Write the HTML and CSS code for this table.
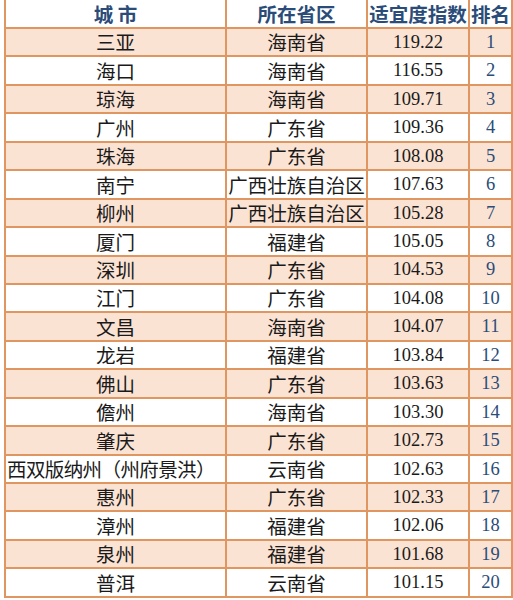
FILE: index.html
```html
<!DOCTYPE html>
<html lang="zh-CN">
<head>
<meta charset="utf-8">
<link rel="stylesheet" href="styles.css">
</head>
<body>
<table class="rank-table">
  <colgroup>
    <col class="c-city"><col class="c-prov"><col class="c-idx"><col class="c-rank">
  </colgroup>
  <thead>
    <tr class="head"><th>城 市</th><th>所在省区</th><th>适宜度指数</th><th>排名</th></tr>
  </thead>
  <tbody>
    <tr class="alt"><td>三亚</td><td>海南省</td><td class="num">119.22</td><td class="rk">1</td></tr>
    <tr><td>海口</td><td>海南省</td><td class="num">116.55</td><td class="rk">2</td></tr>
    <tr class="alt"><td>琼海</td><td>海南省</td><td class="num">109.71</td><td class="rk">3</td></tr>
    <tr><td>广州</td><td>广东省</td><td class="num">109.36</td><td class="rk">4</td></tr>
    <tr class="alt"><td>珠海</td><td>广东省</td><td class="num">108.08</td><td class="rk">5</td></tr>
    <tr><td>南宁</td><td class="wide">广西壮族自治区</td><td class="num">107.63</td><td class="rk">6</td></tr>
    <tr class="alt"><td>柳州</td><td class="wide">广西壮族自治区</td><td class="num">105.28</td><td class="rk">7</td></tr>
    <tr><td>厦门</td><td>福建省</td><td class="num">105.05</td><td class="rk">8</td></tr>
    <tr class="alt"><td>深圳</td><td>广东省</td><td class="num">104.53</td><td class="rk">9</td></tr>
    <tr><td>江门</td><td>广东省</td><td class="num">104.08</td><td class="rk">10</td></tr>
    <tr class="alt"><td>文昌</td><td>海南省</td><td class="num">104.07</td><td class="rk">11</td></tr>
    <tr><td>龙岩</td><td>福建省</td><td class="num">103.84</td><td class="rk">12</td></tr>
    <tr class="alt"><td>佛山</td><td>广东省</td><td class="num">103.63</td><td class="rk">13</td></tr>
    <tr><td>儋州</td><td>海南省</td><td class="num">103.30</td><td class="rk">14</td></tr>
    <tr class="alt"><td>肇庆</td><td>广东省</td><td class="num">102.73</td><td class="rk">15</td></tr>
    <tr><td class="left">西双版纳州（州府景洪）</td><td>云南省</td><td class="num">102.63</td><td class="rk">16</td></tr>
    <tr class="alt"><td>惠州</td><td>广东省</td><td class="num">102.33</td><td class="rk">17</td></tr>
    <tr><td>漳州</td><td>福建省</td><td class="num">102.06</td><td class="rk">18</td></tr>
    <tr class="alt"><td>泉州</td><td>福建省</td><td class="num">101.68</td><td class="rk">19</td></tr>
    <tr><td>普洱</td><td>云南省</td><td class="num">101.15</td><td class="rk">20</td></tr>
  </tbody>
</table>
</body>
</html>
```
FILE: styles.css
```css
html, body {
  margin: 0;
  padding: 0;
  background: #ffffff;
}
.rank-table {
  margin-left: 4px;
  border-collapse: collapse;
  table-layout: fixed;
  width: 507px;
  font-family: "Noto Sans CJK SC", "Noto Sans", sans-serif;
  font-size: 19.5px;
  color: #1a1a1a;
}
.c-city { width: 221px; }
.c-prov { width: 141px; }
.c-idx { width: 102px; }
.c-rank { width: 43px; }
.rank-table th,
.rank-table td {
  border: 2px solid #df9660;
  padding: 0;
  height: 26.45px;
  text-align: center;
  vertical-align: middle;
  line-height: 1;
  white-space: nowrap;
  overflow: visible;
}
.rank-table th {
  border-top: none;
  height: 27px;
  color: #2b4c78;
  font-weight: 700;
  font-size: 19.5px;
}
.alt td {
  background: #fbe3d4;
}
.rank-table td.num {
  font-family: "Liberation Serif", "Times New Roman", serif;
  font-size: 18.5px;
}
.rank-table td.rk {
  font-family: "Liberation Serif", "Times New Roman", serif;
  font-size: 18.5px;
  color: #2b4c78;
}
.rank-table td.left {
  text-align: left;
  padding-left: 1px;
  letter-spacing: -0.6px;
}
.rank-table td.wide {
  letter-spacing: 0;
}
```
